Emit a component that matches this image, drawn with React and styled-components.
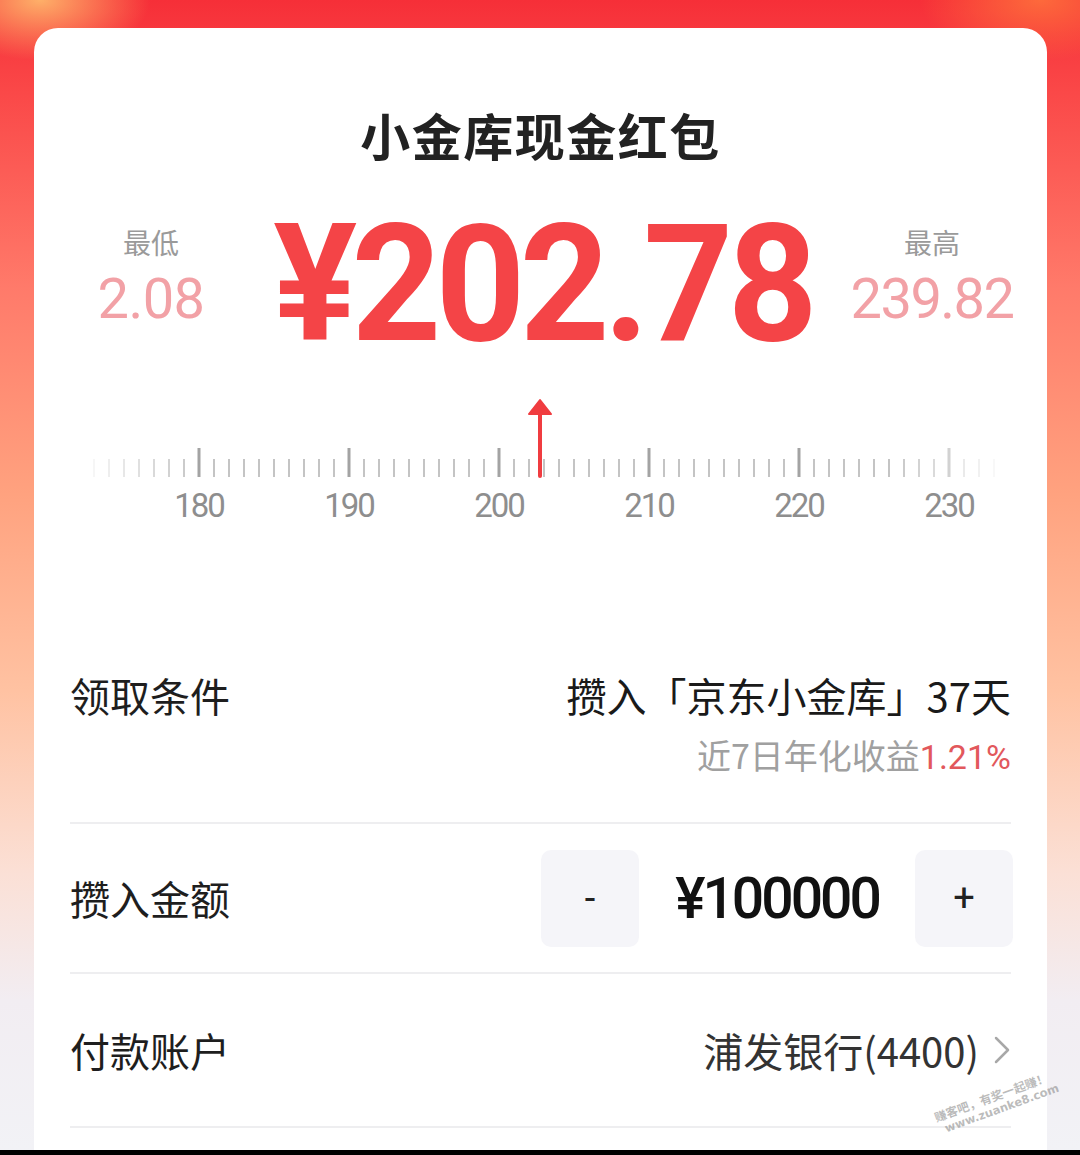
import React from 'react';
import styled, { createGlobalStyle } from 'styled-components';

const GlobalStyle = createGlobalStyle`
    html, body {
        margin: 0;
        padding: 0;
        background: #f2f2f6;
    }
    body {
        font-family: "Noto Sans CJK SC", "Noto Sans", sans-serif;
    }
`;

const Page = styled.div`
    width: 1080px;
    height: 1155px;
    overflow: hidden;
    display: flex;
    flex-direction: column;
`;

const Stage = styled.div`
    flex: 1 1 auto;
    min-height: 0;
    overflow: hidden;
    padding: 28px 33px 0 34px;
    background:
        radial-gradient(ellipse 110px 60px at 40px 0px, rgba(255, 190, 110, 0.9), rgba(255, 190, 110, 0) 100%),
        radial-gradient(ellipse 120px 60px at 1040px 0px, rgba(255, 120, 60, 0.8), rgba(255, 120, 60, 0) 100%),
        linear-gradient(180deg, #f62f38 0%, #fa4848 8%, #ff7a6a 25%, #ffa27f 43%, #ffc2a2 60%, #fbe0d6 76%, #f2edf2 87%, #f2f2f6 100%);
`;

const BottomBar = styled.div`
    flex: 0 0 5px;
    background: #000;
`;

const Card = styled.div`
    position: relative;
    background: #fff;
    border-radius: 24px 24px 0 0;
    padding: 76px 36px 0 36px;
    min-height: 1200px;
`;

const Title = styled.div`
    text-align: center;
    font-size: 50px;
    line-height: 60px;
    font-weight: 700;
    color: #222;
    letter-spacing: 1.5px;
`;

const AmountRow = styled.div`
    display: grid;
    grid-template-columns: 162px 1fr 158px;
    align-items: start;
    margin-top: 35px;
`;

const Side = styled.div`
    display: flex;
    flex-direction: column;
    align-items: center;
    padding-top: 26px;
`;

const SideLabel = styled.div`
    font-size: 28px;
    line-height: 34px;
    color: #9a9a9a;
`;

const SideValue = styled.div`
    font-family: Roboto, "Noto Sans", sans-serif;
    font-size: 56px;
    line-height: 62px;
    font-weight: 400;
    color: #f2a1a6;
    letter-spacing: ${p => p.$tight ? '-1.5px' : '-0.5px'};
    margin-top: 9px;
`;

const Amount = styled.div`
    text-align: center;
    font-family: Roboto, "Noto Sans", sans-serif;
    font-size: 164px;
    line-height: 170px;
    font-weight: 700;
    color: #f44447;
    letter-spacing: -6px;
    transform: scaleX(0.955);
`;

const Ruler = styled.div`
    margin-top: 21px;
`;

const RulerSvg = styled.svg`
    display: block;
`;

const Labels = styled.div`
    display: flex;
    padding-left: 54px;
    margin-top: 6px;
`;

const Label = styled.div`
    flex: 0 0 150px;
    text-align: center;
    font-family: Roboto, "Noto Sans", sans-serif;
    font-size: 33px;
    line-height: 40px;
    color: #8e8e8e;
    letter-spacing: -2px;
`;

const Spacer = styled.div`
    height: 144px;
`;

const Row = styled.div`
    display: flex;
    justify-content: space-between;
    align-items: ${p => p.$top ? 'flex-start' : 'center'};
    height: ${p => p.$h}px;
    border-bottom: 2px solid #eeeef0;
    box-sizing: border-box;
`;

const RowLabel = styled.div`
    font-size: 40px;
    line-height: 50px;
    color: #1e1e1e;
`;

const Condition = styled.div`
    display: flex;
    flex-direction: column;
    align-items: flex-end;
`;

const CondMain = styled.div`
    font-size: 40px;
    line-height: 50px;
    color: #1a1a1a;
`;

const CondSub = styled.div`
    margin-top: 10px;
    font-size: 34px;
    line-height: 50px;
    color: #a0a0a0;
`;

const Rate = styled.span`
    font-family: Roboto, "Noto Sans", sans-serif;
    color: #e2585c;
`;

const Stepper = styled.div`
    display: flex;
    align-items: center;
    margin-right: -2px;
`;

const StepButton = styled.div`
    width: 98px;
    height: 97px;
    border-radius: 10px;
    background: #f5f5f9;
    display: flex;
    align-items: center;
    justify-content: center;
    font-family: Roboto, "Noto Sans", sans-serif;
    font-size: 38px;
    color: #222;
`;

const StepValue = styled.div`
    width: 276px;
    text-align: center;
    font-family: Roboto, "Noto Sans", sans-serif;
    font-size: 57px;
    font-weight: 500;
    color: #111;
    letter-spacing: -3px;
`;

const Account = styled.div`
    display: flex;
    align-items: center;
    gap: 14px;
    font-size: 40px;
    line-height: 50px;
    color: #333;
`;

const Watermark = styled.div`
    position: absolute;
    left: 898px;
    top: 1082px;
    transform: rotate(-20deg);
    transform-origin: left top;
    display: flex;
    flex-direction: column;
    align-items: flex-start;
    color: rgba(120, 120, 120, 0.5);
    font-size: 12px;
    line-height: 15px;
    font-weight: 700;
    pointer-events: none;
    white-space: nowrap;
    span:last-child {
        margin-left: 6px;
        font-family: "DejaVu Sans", sans-serif;
        font-size: 11.5px;
    }
`;

function RulerDrawing() {
    const ticks = [];
    for (let v = 173; v <= 233; v++) {
        const x = 24 + (v - 173) * 15;
        const major = v % 10 === 0;
        let fade = 1;
        if (v < 180) fade = 0.15 + (v - 173) * 0.12;
        if (v > 226) fade = Math.max(0.1, 1 - (v - 226) * 0.13);
        ticks.push(
            <line
                key={v}
                x1={x}
                x2={x}
                y1={major ? 58 : 69}
                y2={87}
                stroke={major ? '#a3a3a3' : '#c4c4c4'}
                strokeWidth={major ? 3 : 2}
                opacity={fade}
            />
        );
    }
    return (
        <RulerSvg width="941" height="90" viewBox="0 0 941 90">
            {ticks}
            <line x1="470" x2="470" y1="22" y2="86" stroke="#f03c40" strokeWidth="4" strokeLinecap="round" />
            <path d="M470 10 L481 24 L459 24 Z" fill="#f03c40" stroke="#f03c40" strokeWidth="2" strokeLinejoin="round" />
        </RulerSvg>
    );
}

export default function App() {
    return (
        <Page>
            <GlobalStyle />
            <Stage>
                <Card>
                    <Title>小金库现金红包</Title>
                    <AmountRow>
                        <Side>
                            <SideLabel>最低</SideLabel>
                            <SideValue>2.08</SideValue>
                        </Side>
                        <Amount>¥202.78</Amount>
                        <Side>
                            <SideLabel>最高</SideLabel>
                            <SideValue $tight>239.82</SideValue>
                        </Side>
                    </AmountRow>
                    <Ruler>
                        <RulerDrawing />
                        <Labels>
                            {[180, 190, 200, 210, 220, 230].map(n => <Label key={n}>{n}</Label>)}
                        </Labels>
                    </Ruler>
                    <Spacer />
                    <Row $top $h={154}>
                        <RowLabel>领取条件</RowLabel>
                        <Condition>
                            <CondMain>攒入「京东小金库」37天</CondMain>
                            <CondSub>近7日年化收益<Rate>1.21%</Rate></CondSub>
                        </Condition>
                    </Row>
                    <Row $h={150}>
                        <RowLabel>攒入金额</RowLabel>
                        <Stepper>
                            <StepButton>-</StepButton>
                            <StepValue>¥100000</StepValue>
                            <StepButton>+</StepButton>
                        </Stepper>
                    </Row>
                    <Row $h={154}>
                        <RowLabel>付款账户</RowLabel>
                        <Account>
                            浦发银行(4400)
                            <svg width="18" height="30" viewBox="0 0 18 30">
                                <path d="M3 3 L15 15 L3 27" fill="none" stroke="#a8a8a8" strokeWidth="2.5" strokeLinecap="round" strokeLinejoin="round" />
                            </svg>
                        </Account>
                    </Row>
                    <Watermark>
                        <span>赚客吧，有奖一起赚！</span>
                        <span>www.zuanke8.com</span>
                    </Watermark>
                </Card>
            </Stage>
            <BottomBar />
        </Page>
    );
}
